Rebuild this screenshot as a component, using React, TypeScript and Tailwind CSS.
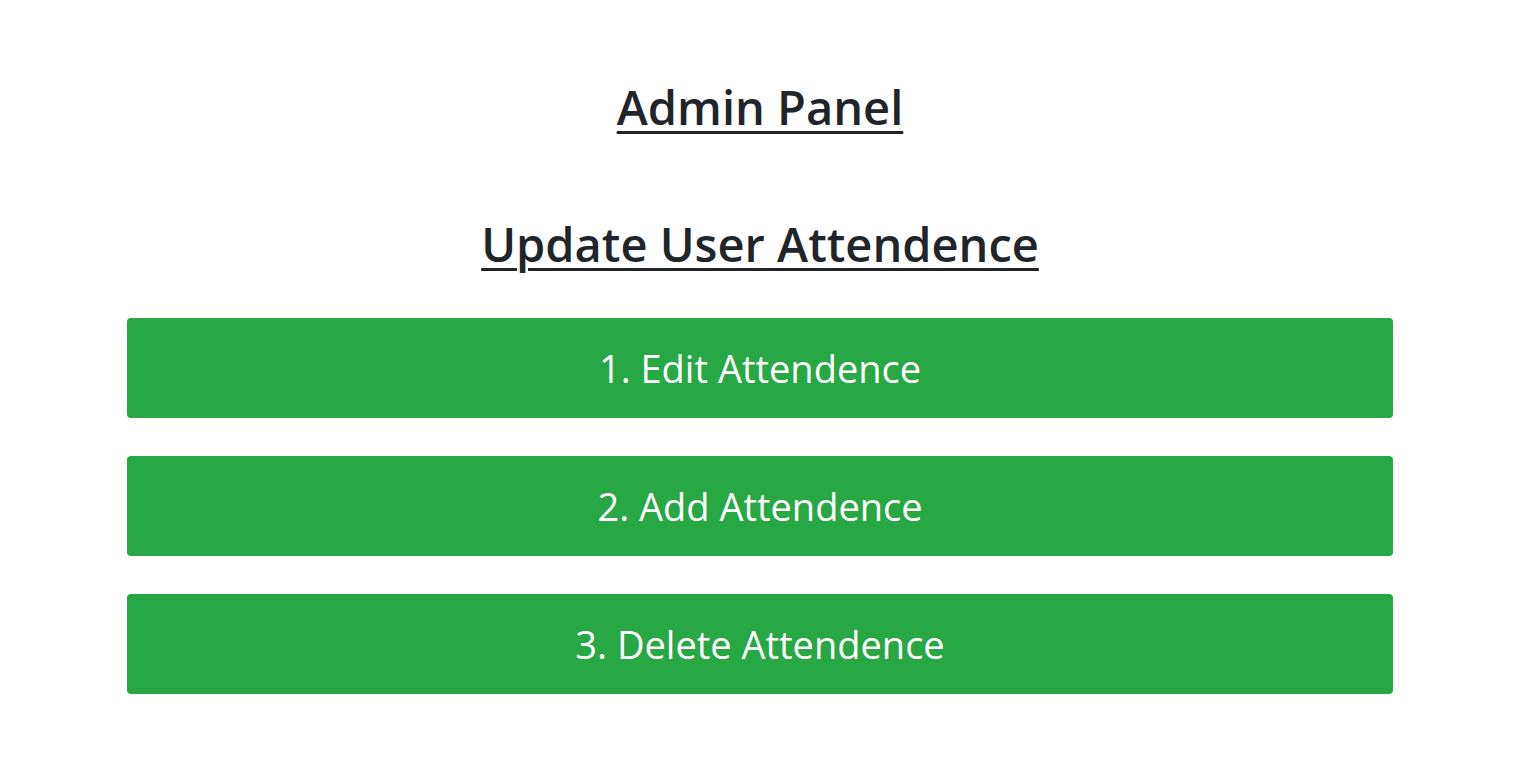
export default function App() {
  const items = ["1. Edit Attendence", "2. Add Attendence", "3. Delete Attendence"];
  return (
    <div className="min-h-[758px] bg-white text-[#212529]" style={{ fontFamily: '"Open Sans", "Noto Sans", sans-serif' }}>
      <div className="mx-auto w-[1266px] pt-[76px]">
        <h1 className="text-center text-[47px] leading-[62px] font-semibold underline decoration-[3px] underline-offset-[6px]">Admin Panel</h1>
        <h2 className="mt-[75px] text-center text-[47px] leading-[62px] font-semibold underline decoration-[3px] underline-offset-[6px]">Update User Attendence</h2>
        <div className="mt-[43px] flex flex-col gap-[38px]">
          {items.map((t) => (
            <button key={t} className="h-[100px] w-full rounded-[4px] bg-[#28a745] text-[38px] text-white">
              {t}
            </button>
          ))}
        </div>
      </div>
    </div>
  );
}
